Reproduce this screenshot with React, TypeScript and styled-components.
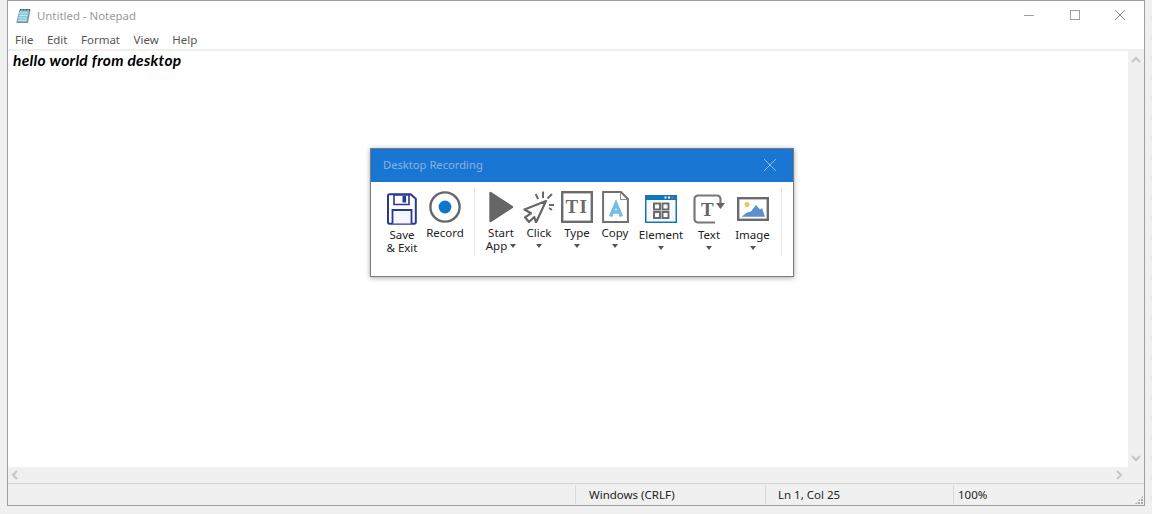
import React from "react";
import styled, { createGlobalStyle } from "styled-components";

const GlobalStyle = createGlobalStyle`
  html, body {
    margin: 0;
    padding: 0;
    height: 514px;
    overflow: hidden;
    background-color: #f0f0f0;
    background-image: radial-gradient(circle, #ebebeb 2px, transparent 2.6px);
    background-size: 20px 20px;
    background-position: 2px 8px;
    font-family: "Noto Sans", "Open Sans", sans-serif;
  }
`;

const NotepadIcon = () => (
  <svg width="16" height="16" viewBox="0 0 16 16">
    <path d="M4 1.500h10.500L12 15H.5z" fill="#9a8a68" />
    <path d="M4 1.500h9.500L11 14H.8z" fill="#86c6de" stroke="#5f9dbb" strokeWidth="0.6" />
    <path d="M3.500 5h8.500M3 7.500h8.500M2.500 10h8.500M2 12.300h8.500" stroke="#d5edf6" strokeWidth="0.8" />
    <path d="M4.500 1v1.500M6 1v1.500M7.500 1v1.500M9 1v1.500M10.500 1v1.500M12 1v1.500M13.500 1v1.500" stroke="#444" strokeWidth="0.8" />
  </svg>
);

const MinimizeIcon = () => (
  <svg width="10" height="10" viewBox="0 0 10 10">
    <path d="M0 5.500h10" stroke="#a0a0a0" strokeWidth="1" />
  </svg>
);

const MaximizeIcon = () => (
  <svg width="10" height="10" viewBox="0 0 10 10">
    <rect x="0.500" y="0.500" width="9" height="9" fill="none" stroke="#a0a0a0" />
  </svg>
);

const CloseIcon = ({ size, color }: { size: number; color: string }) => (
  <svg width={size} height={size} viewBox="0 0 10 10">
    <path d="M0 0 10 10M10 0 0 10" stroke={color} strokeWidth={10 / size} />
  </svg>
);

const Chevron = ({ d }: { d: string }) => (
  <svg width="10" height="10" viewBox="0 0 10 10">
    <path d={d} fill="none" stroke="#c6c6c6" strokeWidth="2" />
  </svg>
);

const SaveIcon = () => (
  <svg width="30" height="32" viewBox="0 0 30 32">
    <path d="M2.500 1.200h21l5.300 4.600v23.500a1.500 1.500 0 0 1-1.500 1.500H2.500A1.500 1.500 0 0 1 1 29.300V2.700a1.500 1.500 0 0 1 1.500-1.500z" fill="#fff" stroke="#2a3990" strokeWidth="2" />
    <path d="M7 2h15v9.500H7z" fill="#fff" stroke="#2a3990" strokeWidth="1.600" />
    <rect x="15.500" y="3" width="3.600" height="6.500" fill="#2a3990" />
    <path d="M5.500 30.500V17h19v13.500" fill="#f4f6fb" stroke="#2a3990" strokeWidth="1.800" />
  </svg>
);

const RecordIcon = () => (
  <svg width="32" height="32" viewBox="0 0 32 32">
    <circle cx="16" cy="16" r="14.600" fill="#fff" stroke="#666" strokeWidth="2.400" />
    <circle cx="16" cy="16" r="6.400" fill="#0b78c9" />
  </svg>
);

const PlayIcon = () => (
  <svg width="26" height="32" viewBox="0 0 26 32">
    <path d="M2.500 2 24 16 2.500 30z" fill="#666" stroke="#666" strokeWidth="2.400" strokeLinejoin="round" />
  </svg>
);

const ClickIcon = () => (
  <svg width="32" height="32" viewBox="0 0 32 32">
    <path d="M23 10 1.500 18.500l6.500 3.800-6 4 4 4.700 5.300-5 1.700 5.500z" fill="#fff" stroke="#666" strokeWidth="2.200" strokeLinejoin="round" />
    <path d="M12.700 3l2.400 5M20 .5v6.500M29 3l-4.500 4.500M31 14h-5M29 19l-3-2" stroke="#6a6a6a" strokeWidth="2" />
  </svg>
);

const IconGlyph = styled.text`
  font-family: "Liberation Serif", serif;
  font-weight: 700;
`;

const TypeIcon = () => (
  <svg width="32" height="32" viewBox="0 0 32 32">
    <rect x="1.200" y="1.200" width="29.600" height="29.600" fill="#fff" stroke="#6b6b6b" strokeWidth="2.400" />
    <IconGlyph x="4.500" y="21.500" fontSize="19" fill="#6b6b6b">T</IconGlyph>
    <IconGlyph x="18.500" y="21.500" fontSize="19" fill="#6b6b6b">I</IconGlyph>
  </svg>
);

const CopyIcon = () => (
  <svg width="27" height="32" viewBox="0 0 27 32">
    <path d="M1.100 1.100H19L25.900 8v22.900H1.100z" fill="#fff" stroke="#707070" strokeWidth="2" />
    <path d="M18.500 1.500V8.500H25.500" fill="none" stroke="#8a8a8a" strokeWidth="1" />
    <path d="M8.500 25.500 14 12.500 19.500 25.500M10.500 21h7" fill="none" stroke="#74bde8" strokeWidth="3.400" />
  </svg>
);

const ElementIcon = () => (
  <svg width="32" height="28" viewBox="0 0 32 28">
    <rect width="32" height="28" fill="#0f78bd" />
    <rect x="1.500" y="5" width="29" height="21.500" fill="#f7f9fb" />
    <rect x="19.500" y="1.500" width="2" height="2" fill="#fff" />
    <rect x="23" y="1.500" width="2" height="2" fill="#fff" />
    <rect x="26.500" y="1.500" width="2" height="2" fill="#e85a6a" />
    <rect x="9" y="8.500" width="6" height="6" fill="none" stroke="#666" strokeWidth="1.900" />
    <rect x="17.500" y="8.500" width="6" height="6" fill="none" stroke="#666" strokeWidth="1.900" />
    <rect x="9" y="17" width="6" height="6" fill="none" stroke="#666" strokeWidth="1.900" />
    <rect x="17.500" y="17" width="6" height="6" fill="none" stroke="#666" strokeWidth="1.900" />
  </svg>
);

const TextIcon = () => (
  <svg width="33" height="30" viewBox="0 0 33 30">
    <path d="M27.500 10V5a3.500 3.500 0 0 0-3.500-3.500H5A3.500 3.500 0 0 0 1.500 5v20A3.500 3.500 0 0 0 5 28.500h17" fill="none" stroke="#777" strokeWidth="2.200" />
    <path d="M23 9 h9 L27.500 15 z" fill="#666" />
    <IconGlyph x="8" y="21.500" fontSize="19" fill="#666">T</IconGlyph>
  </svg>
);

const ImageIcon = () => (
  <svg width="32" height="24" viewBox="0 0 32 24">
    <rect x="1.200" y="1.200" width="29.600" height="21.600" fill="#fff" stroke="#6b6b6b" strokeWidth="2.400" />
    <circle cx="10" cy="7.500" r="2.500" fill="#eac75f" />
    <path d="M4.500 19.700 10 15.500 14 14.500 19 8 23 12.500 25 11 28 19.700z" fill="#5c8fcc" />
  </svg>
);

interface ToolData {
  label: string[];
  width: number;
  slot: number;
  top: number;
  icon: React.ReactNode;
  caret?: "inline" | "below";
}

const fileTools: ToolData[] = [
  { label: ["Save", "& Exit"], width: 40, slot: 35, top: 3, icon: <SaveIcon /> },
  { label: ["Record"], width: 46, slot: 33, top: 1, icon: <RecordIcon /> },
];

const actionTools: ToolData[] = [
  { label: ["Start", "App"], width: 38, slot: 33, top: 1, icon: <PlayIcon />, caret: "inline" },
  { label: ["Click"], width: 38, slot: 33, top: 1, icon: <ClickIcon />, caret: "below" },
  { label: ["Type"], width: 38, slot: 33, top: 1, icon: <TypeIcon />, caret: "below" },
  { label: ["Copy"], width: 38, slot: 33, top: 1, icon: <CopyIcon />, caret: "below" },
  { label: ["Element"], width: 54, slot: 35, top: 5, icon: <ElementIcon />, caret: "below" },
  { label: ["Text"], width: 42, slot: 35, top: 4, icon: <TextIcon />, caret: "below" },
  { label: ["Image"], width: 45, slot: 35, top: 7, icon: <ImageIcon />, caret: "below" },
];

const Tool = ({ data }: { data: ToolData }) => (
  <ToolRoot $width={data.width}>
    <IconSlot $height={data.slot} $top={data.top}>{data.icon}</IconSlot>
    {data.label.map((line, i) => (
      <ToolLabel key={line}>
        {line}
        {data.caret === "inline" && i === data.label.length - 1 && <InlineCaret />}
      </ToolLabel>
    ))}
    {data.caret === "below" && <BelowCaret />}
  </ToolRoot>
);

const App = () => (
  <>
    <GlobalStyle />
    <Window>
      <TitleBar>
        <NotepadIcon />
        <Title>Untitled - Notepad</Title>
        <WindowButtons>
          <WindowButton><MinimizeIcon /></WindowButton>
          <WindowButton><MaximizeIcon /></WindowButton>
          <WindowButton><CloseIcon size={10} color="#8c8c8c" /></WindowButton>
        </WindowButtons>
      </TitleBar>
      <MenuBar>
        {["File", "Edit", "Format", "View", "Help"].map((item) => (
          <MenuItem key={item}>{item}</MenuItem>
        ))}
      </MenuBar>
      <Editor>
        <EditorRow>
          <Page>hello world from desktop</Page>
          <VScroll>
            <Chevron d="M1 7l4-4 4 4" />
            <Chevron d="M1 3l4 4 4-4" />
          </VScroll>
        </EditorRow>
        <HScroll>
          <Chevron d="M7 1 3 5l4 4" />
          <Chevron d="M3 1l4 4-4 4" />
        </HScroll>
      </Editor>
      <StatusBar>
        <StatusCell />
        <StatusCell $divided $pad={13}>Windows (CRLF)</StatusCell>
        <StatusCell $divided $pad={12}>Ln 1, Col 25</StatusCell>
        <StatusCell $divided $pad={4}>100%</StatusCell>
        <Grip />
      </StatusBar>
      <Dialog>
        <DialogHeader>
          <DialogTitle>Desktop Recording</DialogTitle>
          <CloseIcon size={12} color="#8fbcec" />
        </DialogHeader>
        <Toolbar>
          {fileTools.map((t) => <Tool key={t.label[0]} data={t} />)}
          <ToolDivider />
          {actionTools.map((t) => <Tool key={t.label[0]} data={t} />)}
          <ToolDivider />
        </Toolbar>
      </Dialog>
    </Window>
  </>
);

const Window = styled.div`
  position: relative;
  box-sizing: border-box;
  margin-left: 7px;
  width: 1138px;
  height: 506px;
  border: 1px solid #a0a0a0;
  background: #fff;
  display: flex;
  flex-direction: column;
`;

const TitleBar = styled.div`
  height: 29px;
  flex: none;
  display: flex;
  align-items: center;
  padding-left: 8px;
  background: #fff;
`;

const Title = styled.div`
  margin-left: 5px;
  font-size: 11.400px;
  color: #999;
`;

const WindowButtons = styled.div`
  margin-left: auto;
  display: flex;
  padding-right: 1px;
`;

const WindowButton = styled.div`
  width: 45.500px;
  height: 29px;
  display: flex;
  align-items: center;
  justify-content: center;
  padding-bottom: 2px;
  box-sizing: border-box;
`;

const MenuBar = styled.div`
  height: 21px;
  flex: none;
  display: flex;
  align-items: center;
  padding-left: 7px;
  gap: 13.500px;
  box-sizing: border-box;
  border-bottom: 2px solid #f0f0f0;
`;

const MenuItem = styled.div`
  font-size: 11.500px;
  color: #555;
`;

const Editor = styled.div`
  flex: 1;
  display: flex;
  flex-direction: column;
  min-height: 0;
`;

const EditorRow = styled.div`
  flex: 1;
  display: flex;
  min-height: 0;
`;

const Page = styled.div`
  flex: 1;
  padding: 0 0 0 5px;
  font-family: "Lato", sans-serif;
  font-size: 15.500px;
  line-height: 18px;
  letter-spacing: 0.3px;
  font-style: italic;
  font-weight: 700;
  color: #000;
`;

const VScroll = styled.div`
  width: 16px;
  flex: none;
  background: #f0f0f0;
  display: flex;
  flex-direction: column;
  justify-content: space-between;
  align-items: center;
  padding: 4px 0;
`;

const HScroll = styled.div`
  height: 16px;
  flex: none;
  background: #f0f0f0;
  display: flex;
  align-items: center;
  justify-content: space-between;
  padding: 0 20px 0 2px;
`;

const StatusBar = styled.div`
  position: relative;
  height: 22px;
  flex: none;
  box-sizing: border-box;
  background: #f0f0f0;
  border-top: 1px solid #d2d2d2;
  display: grid;
  grid-template-columns: 567px 190px 188px 1fr;
  font-size: 11.500px;
  color: #222;
`;

const StatusCell = styled.div<{ $divided?: boolean; $pad?: number }>`
  display: flex;
  align-items: center;
  padding-left: ${(p) => p.$pad ?? 0}px;
  margin: 1px 0;
  border-left: 1px solid ${(p) => (p.$divided ? "#d9d9d9" : "transparent")};
`;

const Grip = styled.div`
  position: absolute;
  right: 1px;
  bottom: 1px;
  width: 8px;
  height: 8px;
  background-image: radial-gradient(circle at 1px 1px, #a8a8a8 1px, transparent 1px);
  background-size: 3px 3px;
  clip-path: polygon(100% 0, 100% 100%, 0 100%);
`;

const Dialog = styled.div`
  position: absolute;
  left: 362px;
  top: 147px;
  width: 424px;
  height: 129px;
  box-sizing: border-box;
  background: #fff;
  border: 1px solid #7a7a7a;
  box-shadow: 0 1px 5px rgba(0, 0, 0, 0.35);
  display: flex;
  flex-direction: column;
`;

const DialogHeader = styled.div`
  height: 33px;
  flex: none;
  background: #1976d2;
  display: flex;
  align-items: center;
  justify-content: space-between;
  padding: 0 17px 2px 12px;
  box-sizing: border-box;
`;

const DialogTitle = styled.div`
  font-size: 11.200px;
  color: #86b3e6;
`;

const Toolbar = styled.div`
  display: flex;
  align-items: flex-start;
  padding: 8px 0 0 11px;
`;

const ToolRoot = styled.div<{ $width: number }>`
  width: ${(p) => p.$width}px;
  flex: none;
  display: flex;
  flex-direction: column;
  align-items: center;
`;

const IconSlot = styled.div<{ $height: number; $top: number }>`
  height: ${(p) => p.$height}px;
  box-sizing: border-box;
  padding-top: ${(p) => p.$top}px;
  margin-bottom: 3px;
  display: flex;
  align-items: flex-start;
  justify-content: center;
`;

const ToolLabel = styled.div`
  font-size: 11.500px;
  line-height: 13px;
  color: #222;
  white-space: nowrap;
  display: flex;
  align-items: center;
`;

const InlineCaret = styled.span`
  margin-left: 3px;
  width: 0;
  height: 0;
  border-left: 3.500px solid transparent;
  border-right: 3.500px solid transparent;
  border-top: 4px solid #555;
`;

const BelowCaret = styled.span`
  margin-top: 5px;
  width: 0;
  height: 0;
  border-left: 3.500px solid transparent;
  border-right: 3.500px solid transparent;
  border-top: 4px solid #555;
`;

const ToolDivider = styled.div`
  width: 1px;
  height: 68px;
  flex: none;
  margin: -2px 7px 0 6px;
  background: #e6e6e6;
`;

export default App;
